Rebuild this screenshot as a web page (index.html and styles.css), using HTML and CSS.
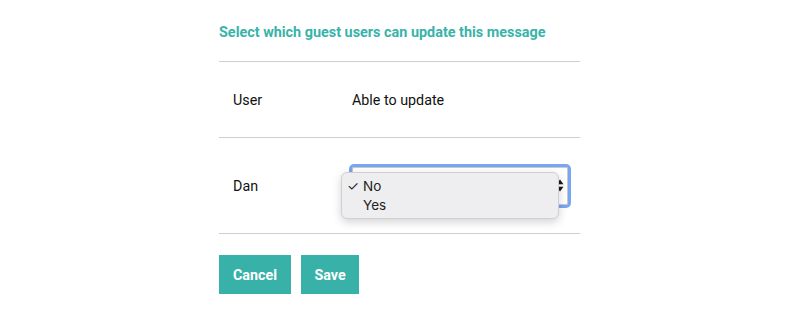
FILE: index.html
```html
<!DOCTYPE html>
<html lang="en">
<head>
    <meta name="viewport" content="width=device-width, initial-scale=1">
    <title>Guest permissions</title>
    <link rel="stylesheet" href="styles.css">
</head>
<body>
    <div class="panel">
        <h3 class="title">Select which guest users can update this message</h3>

        <table class="perm-table">
            <tr>
                <td class="col-user">User</td>
                <td>Able to update</td>
            </tr>
            <tr class="row-guest">
                <td class="col-user">Dan</td>
                <td>
                    <div class="select-wrap">
                        <div class="fake-select">
                            <svg class="arrows" width="8" height="13" viewBox="0 0 8 13">
                                <path d="M4 0.5 L7.5 5.2 L0.5 5.2 Z" fill="#1a1a1a"/>
                                <path d="M4 12.5 L7.5 7.8 L0.5 7.8 Z" fill="#1a1a1a"/>
                            </svg>
                        </div>
                        <ul class="dropdown">
                            <li class="selected"><span class="check">✓</span>No</li>
                            <li><span class="check"></span>Yes</li>
                        </ul>
                    </div>
                </td>
            </tr>
        </table>

        <div class="actions">
            <button class="btn btn-cancel">Cancel</button>
            <button class="btn btn-save">Save</button>
        </div>
    </div>
</body>
</html>
```

FILE: styles.css
```css
body {
    margin: 0;
    font-family: Roboto, "Liberation Sans", sans-serif;
    background: #fff;
    color: #111;
}
.panel {
    width: 361px;
    margin-left: 219px;
    padding-top: 24px;
}
.title {
    margin: 0;
    color: #38b3a9;
    font-size: 14.4px;
    font-weight: 700;
    line-height: 18px;
    padding-bottom: 19px;
    border-bottom: 1px solid #cfcfcf;
}
.perm-table {
    width: 100%;
    border-collapse: collapse;
    font-size: 14.3px;
}
.perm-table td {
    padding: 0;
    height: 75px;
    border-bottom: 1px solid #cfcfcf;
    vertical-align: middle;
}
.perm-table .row-guest td {
    height: 95px;
}
.col-user {
    width: 119px;
    padding-left: 14px !important;
}
.select-wrap {
    position: relative;
    width: 216px;
}
.fake-select {
    height: 36px;
    border: 1px solid #c9c9c9;
    border-radius: 2px;
    outline: 3px solid #78a6f0;
    background: #fff;
    display: flex;
    justify-content: flex-end;
    align-items: center;
    padding-right: 3px;
}
.arrows {
    display: block;
}
.dropdown {
    position: absolute;
    left: -11px;
    top: 5px;
    width: 216px;
    margin: 0;
    padding: 4px 0 3px;
    list-style: none;
    background: #eeeef0;
    border: 1px solid #d0d0d2;
    border-radius: 6px;
    box-shadow: 0 3px 10px rgba(0, 0, 0, 0.18);
    font-family: Inter, "Noto Sans", sans-serif;
    font-size: 13.5px;
    color: #222;
}
.dropdown li {
    display: flex;
    align-items: center;
    height: 19px;
    padding-left: 5px;
}
.check {
    width: 16px;
    font-size: 13.5px;
}
.actions {
    display: flex;
    gap: 10px;
    padding-top: 21px;
}
.btn {
    height: 39px;
    padding: 0;
    background: #38b1a8;
    color: #fff;
    border: none;
    font-family: Roboto, "Liberation Sans", sans-serif;
    font-size: 14.3px;
    font-weight: 700;
    cursor: pointer;
}
.btn-cancel {
    width: 72px;
}
.btn-save {
    width: 58px;
}
```
